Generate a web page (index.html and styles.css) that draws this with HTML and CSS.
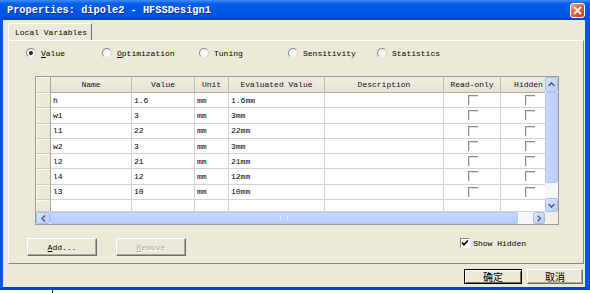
FILE: index.html
```html
<!DOCTYPE html>
<html>
<head>
<meta charset="utf-8">
<link rel="stylesheet" href="styles.css">
</head>
<body>
<div class="window">
  <div class="titlebar">
    <span class="title">Properties: dipole2 - HFSSDesign1</span>
    <span class="close"><svg width="13" height="13" viewBox="0 0 13 13"><path d="M3.5 3.5 L9.5 9.5 M9.5 3.5 L3.5 9.5" stroke="#fff" stroke-width="1.8" stroke-linecap="round"/></svg></span>
  </div>
  <div class="frame">
    <div class="tabs"><div class="tab">Local Variables</div></div>
    <div class="panel">
      <div class="radios">
        <div class="radio"><span class="dot on"></span><span><u>V</u>alue</span></div>
        <div class="radio"><span class="dot"></span><span><u>O</u>ptimization</span></div>
        <div class="radio"><span class="dot"></span><span>Tuning</span></div>
        <div class="radio"><span class="dot"></span><span>Sensitivity</span></div>
        <div class="radio"><span class="dot"></span><span>Statistics</span></div>
      </div>
      <div class="grid">
        <div class="data">
          <div class="row head">
            <div class="c rh"></div><div class="c">Name</div><div class="c">Value</div><div class="c">Unit</div><div class="c">Evaluated Value</div><div class="c">Description</div><div class="c">Read-only</div><div class="c">Hidden</div>
          </div>
          <div class="row"><div class="c rh"></div><div class="c">h</div><div class="c">1.6</div><div class="c">mm</div><div class="c">1.6mm</div><div class="c"></div><div class="c"><span class="cb"></span></div><div class="c"><span class="cb"></span></div></div>
          <div class="row"><div class="c rh"></div><div class="c">w1</div><div class="c">3</div><div class="c">mm</div><div class="c">3mm</div><div class="c"></div><div class="c"><span class="cb"></span></div><div class="c"><span class="cb"></span></div></div>
          <div class="row"><div class="c rh"></div><div class="c">l1</div><div class="c">22</div><div class="c">mm</div><div class="c">22mm</div><div class="c"></div><div class="c"><span class="cb"></span></div><div class="c"><span class="cb"></span></div></div>
          <div class="row"><div class="c rh"></div><div class="c">w2</div><div class="c">3</div><div class="c">mm</div><div class="c">3mm</div><div class="c"></div><div class="c"><span class="cb"></span></div><div class="c"><span class="cb"></span></div></div>
          <div class="row"><div class="c rh"></div><div class="c">l2</div><div class="c">21</div><div class="c">mm</div><div class="c">21mm</div><div class="c"></div><div class="c"><span class="cb"></span></div><div class="c"><span class="cb"></span></div></div>
          <div class="row"><div class="c rh"></div><div class="c">l4</div><div class="c">12</div><div class="c">mm</div><div class="c">12mm</div><div class="c"></div><div class="c"><span class="cb"></span></div><div class="c"><span class="cb"></span></div></div>
          <div class="row"><div class="c rh"></div><div class="c">l3</div><div class="c">10</div><div class="c">mm</div><div class="c">10mm</div><div class="c"></div><div class="c"><span class="cb"></span></div><div class="c"><span class="cb"></span></div></div>
          <div class="row last"><div class="c rh"></div><div class="c"></div><div class="c"></div><div class="c"></div><div class="c"></div><div class="c"></div><div class="c"></div><div class="c"></div></div>
        </div>
        <div class="vscroll">
          <div class="sbtn up"><svg width="11" height="11" viewBox="0 0 11 11"><polyline points="2.5,7 5.5,4 8.5,7" fill="none" stroke="#4D6185" stroke-width="1.6"/></svg></div>
          <div class="vthumb"></div>
          <div class="strack"></div>
          <div class="sbtn down"><svg width="11" height="11" viewBox="0 0 11 11"><polyline points="2.5,4 5.5,7 8.5,4" fill="none" stroke="#4D6185" stroke-width="1.6"/></svg></div>
        </div>
        <div class="hscroll">
          <div class="sbtn left"><svg width="11" height="11" viewBox="0 0 11 11"><polyline points="7,2.5 4,5.5 7,8.5" fill="none" stroke="#4D6185" stroke-width="1.6"/></svg></div>
          <div class="hthumb"><span class="grip"></span></div>
          <div class="strack"></div>
          <div class="sbtn right"><svg width="11" height="11" viewBox="0 0 11 11"><polyline points="4,2.5 7,5.5 4,8.5" fill="none" stroke="#4D6185" stroke-width="1.6"/></svg></div>
        </div>
        <div class="corner"></div>
      </div>
      <div class="actions">
        <div class="btn big"><span><u>A</u>dd...</span></div>
        <div class="btn big disabled"><span><u>R</u>emove</span></div>
        <div class="show"><span class="check"><svg width="8" height="8" viewBox="0 0 8 8"><polyline points="1,3.5 3,5.8 7,1.5" fill="none" stroke="#000" stroke-width="1.6"/></svg></span><span>Show Hidden</span></div>
      </div>
    </div>
    <div class="footer">
      <div class="btn ok"><span>确定</span></div>
      <div class="btn cancel"><span>取消</span></div>
    </div>
  </div>
</div>
<div class="below"><span class="tick"></span></div>
</body>
</html>
```
FILE: styles.css
```css
html, body { margin: 0; padding: 0; background: #fff; }
body { font-family: "Liberation Mono", "DejaVu Sans Mono", monospace; color: #000; }

.window { width: 590px; height: 290px; display: flex; flex-direction: column; }

.titlebar {
  height: 20px; flex: none; box-sizing: border-box;
  display: flex; align-items: center; justify-content: space-between;
  padding: 0 5px 0 7px;
  background: linear-gradient(to bottom, #3d8ef7 0%, #0a5fe9 18%, #0056e6 50%, #0052e2 82%, #0045cc 100%);
}
.title {
  color: #fff; font-weight: bold; font-size: 10.3px;
  font-family: "Liberation Mono", monospace;
  text-shadow: 1px 1px 0 #0b2d9a;
}
.close {
  width: 15px; height: 15px; box-sizing: border-box;
  border: 1px solid #fff; border-radius: 3px;
  background: linear-gradient(135deg, #f2a38d 0%, #e0603c 45%, #c9421c 100%);
  display: flex; align-items: center; justify-content: center;
}

.frame {
  flex: 1; min-height: 0; background: #ECE9D8;
  border-left: 3px solid #0a55e0; border-right: 5px solid #0a55e0; border-bottom: 3px solid #0544cf;
  padding: 3px 1px 0 5px;
  display: flex; flex-direction: column;
}

.tabs { height: 17px; flex: none; display: flex; }
.tab {
  width: 84px; box-sizing: border-box; font-size: 8px;
  border-top: 1px solid #fff; border-left: 1px solid #fff; border-right: 1px solid #716F64;
  border-radius: 2px 2px 0 0;
  padding-left: 6px; display: flex; align-items: center;
}

.panel {
  height: 224px; flex: none; box-sizing: border-box;
  border: 1px solid; border-color: #fff #8a877a #8a877a #fff;
  display: flex; flex-direction: column;
}

.radios {
  margin-top: 6px; height: 12px; padding-left: 17px;
  display: grid; grid-template-columns: 76px 97px 89px 89px auto;
  font-size: 8px;
}
.radio { display: flex; align-items: center; gap: 5px; }
.dot {
  width: 10px; height: 10px; box-sizing: border-box; border-radius: 50%;
  border: 1px solid; border-color: #8a8a8a #d0d0d0 #e8e8e8 #8a8a8a;
  background: radial-gradient(circle at 60% 60%, #fff 0%, #f4f4f4 60%, #dcdcdc 100%);
  display: flex; align-items: center; justify-content: center;
}
.dot.on::after { content: ""; width: 4px; height: 4px; border-radius: 50%; background: #222; }

.grid {
  margin: 17px 0 0 26px; width: 524px; height: 149px; box-sizing: border-box;
  border: 1px solid #9a9a9a;
  display: grid; grid-template-columns: 509px 13px; grid-template-rows: 135px 12px;
}
.data { overflow: hidden; background: #fff; display: flex; flex-direction: column; }
.row {
  display: grid; flex: none;
  grid-template-columns: 15px 81px 63px 34px 96px 119px 57px 56px;
  height: 15.3px; font-size: 8px;
}
.row.head { height: 16px; }
.row.last { flex: 1; }
.c {
  box-sizing: border-box; border-right: 1px solid #d2d2d2; border-bottom: 1px solid #d2d2d2;
  padding-left: 2px; display: flex; align-items: center; white-space: nowrap; overflow: hidden;
}
.head .c {
  background: linear-gradient(#f0eee4, #e6e3d4); justify-content: center; padding-left: 0;
  border-right: 1px solid #c0bca9; border-bottom: 1px solid #b2ae9c; color: #111;
}
.c.rh {
  background: #ECE9D8; border-right: 1px solid #a8a69a; border-bottom: 1px solid #d0ccbc;
  box-shadow: inset 1px 1px 0 #fafaf5;
}
.head .c.rh { border-right: 1px solid #a8a69a; }
.cb {
  width: 10px; height: 10px; box-sizing: border-box; margin: 0 auto;
  border-top: 1px solid #8c8c8c; border-left: 1px solid #8c8c8c;
  box-shadow: inset 1px 1px 0 #e0e0e0;
  align-self: flex-start; margin-top: 2px;
}

.vscroll { display: flex; flex-direction: column; background: #f2f4fb; }
.hscroll { display: flex; background: #f2f4fb; }
.sbtn {
  box-sizing: border-box; flex: none; display: flex; align-items: center; justify-content: center;
  background: linear-gradient(135deg, #dbe6fd, #b9cdf9);
  border: 1px solid #a9bff0; border-radius: 2px;
}
.sbtn.up { height: 15px; }
.sbtn.down { height: 14px; }
.sbtn.left { width: 14px; }
.sbtn.right { width: 12px; }
.vthumb {
  height: 91px; flex: none; box-sizing: border-box;
  background: linear-gradient(to right, #c8d8fd, #b8cdfa);
  border: 1px solid #b0c6f5; border-radius: 2px;
}
.hthumb {
  width: 468px; flex: none; box-sizing: border-box;
  background: linear-gradient(#c8d8fd, #b8cdfa);
  border: 1px solid #b0c6f5; border-radius: 2px;
  display: flex; align-items: center; justify-content: center;
}
.grip { width: 6px; height: 4px; border-left: 1px solid #e6eefe; border-right: 1px solid #e6eefe; }
.strack { flex: 1; background: #f6f7fb; }
.corner { background: #f1efe6; }

.actions { margin-top: 13px; display: flex; align-items: flex-start; padding-left: 18px; gap: 19px; }
.btn {
  box-sizing: border-box; background: #ECE9D8;
  border: 1px solid; border-color: #fff #716F64 #716F64 #fff;
  box-shadow: inset -1px -1px 0 #ACA899;
  display: flex; align-items: center; justify-content: center;
  font-size: 8px;
}
.btn.big { width: 70px; height: 18px; }
.btn.disabled { color: #ACA899; text-shadow: 1px 1px 0 #fff; }
.show { margin-left: auto; margin-right: 57px; display: flex; align-items: center; gap: 3px; font-size: 8px; height: 10px; }
.check {
  width: 10px; height: 10px; box-sizing: border-box; background: #fff;
  border: 1px solid; border-color: #808080 #fff #fff #808080;
  display: flex; align-items: center; justify-content: center;
}

.footer { margin-top: 5px; display: flex; justify-content: flex-end; gap: 5px; padding-right: 1px; }
.btn.ok, .btn.cancel { height: 15px; font-family: "Noto Sans CJK SC", sans-serif; font-size: 10px; }
.btn.ok { width: 58px; border: 1px solid #000; box-shadow: inset 1px 1px 0 #fff, inset -1px -1px 0 #716F64; }
.btn.cancel { width: 56px; }

.below { height: 3px; position: relative; }
.tick { display: block; width: 1px; height: 3px; margin-left: 52px; background: #222; }
```
